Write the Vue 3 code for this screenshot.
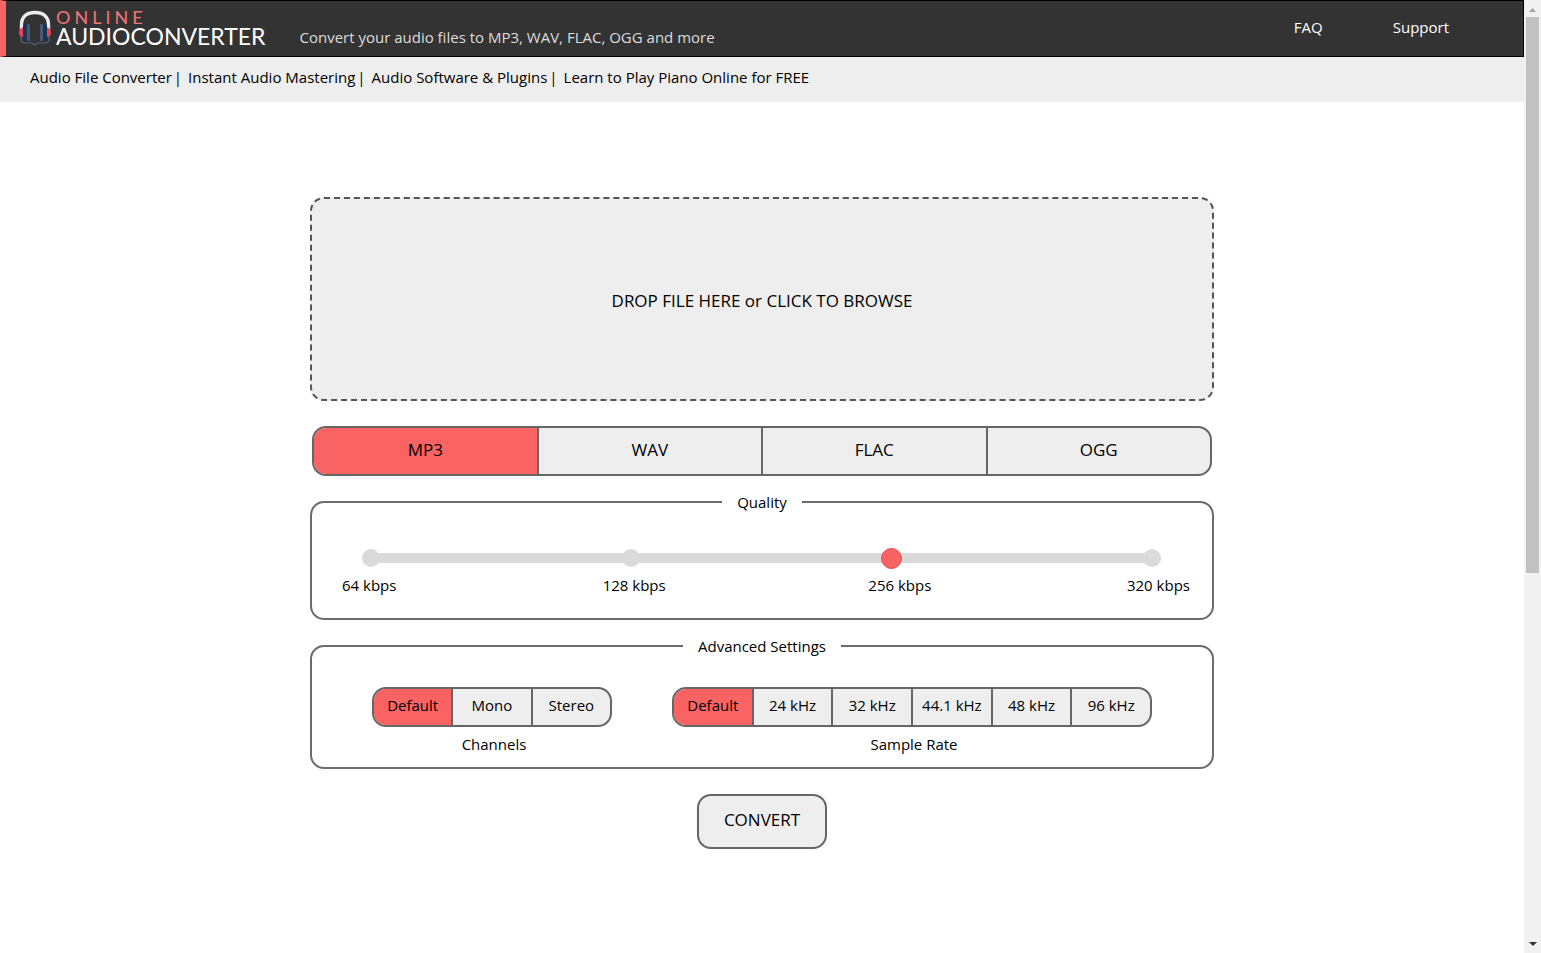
<script setup>
import { ref } from 'vue'

const links = [
  'Audio File Converter',
  'Instant Audio Mastering',
  'Audio Software & Plugins',
  'Learn to Play Piano Online for FREE',
]
const formats = ['MP3', 'WAV', 'FLAC', 'OGG']
const bitrates = ['64 kbps', '128 kbps', '256 kbps', '320 kbps']
const channelModes = ['Default', 'Mono', 'Stereo']
const sampleRates = ['Default', '24 kHz', '32 kHz', '44.1 kHz', '48 kHz', '96 kHz']

const format = ref('MP3')
const quality = ref(2)
const channels = ref('Default')
const sampleRate = ref('Default')
</script>

<template>
  <div class="window">
    <div class="page">
      <header class="header">
        <a class="logo" href="#">
          <svg class="logo-icon" viewBox="0 0 34 38" width="34" height="38" aria-hidden="true">
            <path d="M3.500 21V16C3.500 7 9.500 3.500 17 3.500S30.500 7 30.500 16V21" fill="none" stroke="#ececec" stroke-width="3.400" />
            <path d="M3 26V30Q3 34 8 34H14L17 36L20 34H26Q31 34 31 30V26" fill="none" stroke="#56607c" stroke-width="1.200" />
            <path d="M6 18Q1 19 1 23.500T6 28ZM28 18Q33 19 33 23.500T28 28Z" fill="#e8455a" />
            <rect x="5" y="15" width="5" height="17" rx="2" fill="#1c3550" />
            <rect x="9" y="15" width="3" height="17" rx="1" fill="#47587a" />
            <rect x="24" y="15" width="5" height="17" rx="2" fill="#1c3550" />
            <rect x="22" y="15" width="3" height="17" rx="1" fill="#47587a" />
          </svg>
          <span class="wordmark">
            <span class="word-top">ONLINE</span>
            <span class="word-main">AUDIOCONVERTER</span>
          </span>
        </a>
        <p class="tagline">Convert your audio files to MP3, WAV, FLAC, OGG and more</p>
        <nav class="menu">
          <a href="#">FAQ</a>
          <a href="#">Support</a>
        </nav>
      </header>

      <nav class="links">
        <span v-for="(link, i) in links" :key="link" class="link-item">
          <a href="#">{{ link }}</a><span v-if="i < links.length - 1" class="bar">|</span>
        </span>
      </nav>

      <main class="converter">
        <button class="dropzone" type="button">DROP FILE HERE or CLICK TO BROWSE</button>

        <div class="segments formats" role="radiogroup" aria-label="Format">
          <label v-for="f in formats" :key="f" class="segment" :class="{ active: f === format }">
            <input v-model="format" type="radio" name="format" :value="f" />{{ f }}
          </label>
        </div>

        <fieldset class="panel quality">
          <legend>Quality</legend>
          <div class="slider">
            <div class="track">
              <span v-for="b in bitrates" :key="b" class="stop"></span>
            </div>
            <input v-model.number="quality" class="range" type="range" min="0" max="3" step="1" aria-label="Quality" />
          </div>
          <div class="bitrates">
            <span v-for="b in bitrates" :key="b">{{ b }}</span>
          </div>
        </fieldset>

        <fieldset class="panel advanced">
          <legend>Advanced Settings</legend>
          <div class="setting channels">
            <div class="segments" role="radiogroup" aria-labelledby="channels-label">
              <label v-for="c in channelModes" :key="c" class="segment" :class="{ active: c === channels }">
                <input v-model="channels" type="radio" name="channels" :value="c" />{{ c }}
              </label>
            </div>
            <span id="channels-label" class="caption">Channels</span>
          </div>
          <div class="setting rates">
            <div class="segments" role="radiogroup" aria-labelledby="rate-label">
              <label v-for="r in sampleRates" :key="r" class="segment" :class="{ active: r === sampleRate }">
                <input v-model="sampleRate" type="radio" name="rate" :value="r" />{{ r }}
              </label>
            </div>
            <span id="rate-label" class="caption">Sample Rate</span>
          </div>
        </fieldset>

        <button class="convert" type="button">CONVERT</button>
      </main>
    </div>

    <div class="scrollbar" aria-hidden="true">
      <svg class="arrow up" viewBox="0 0 7 4" width="7" height="4"><path d="M0 4L3.500 0L7 4Z" fill="#a3a3a3" /></svg>
      <div class="rail"><div class="thumb"></div></div>
      <svg class="arrow" viewBox="0 0 8 4" width="8" height="4"><path d="M0 0H8L4 4Z" fill="#333" /></svg>
    </div>
  </div>
</template>

<style>
body {
  background: #fff;
}
</style>

<style scoped>
.window {
  display: flex;
  height: 100vh;
  overflow: hidden;
  font-family: "Open Sans", "Noto Sans", sans-serif;
  font-size: 15px;
  line-height: 24px;
  color: #000;
}

.window * {
  box-sizing: border-box;
}

.page {
  flex: 1;
  min-width: 0;
}

a {
  color: inherit;
  text-decoration: none;
}

button {
  font: inherit;
  color: inherit;
  cursor: pointer;
}

.header {
  display: flex;
  height: 57px;
  border: 1px solid #000;
  border-left: 6px solid #f96363;
  background: #333;
}

.logo {
  display: flex;
  gap: 4px;
  padding: 8px 0 0 12px;
}

.wordmark {
  display: flex;
  flex-direction: column;
  font-family: Lato, sans-serif;
}

.word-top {
  font-size: 18px;
  line-height: 17px;
  letter-spacing: 4px;
  color: #f07478;
}

.word-main {
  font-size: 23px;
  line-height: 20px;
  color: #fff;
}

.tagline {
  margin: 24px 0 0 34px;
  color: #ddd;
}

.menu {
  display: flex;
  gap: 70px;
  margin: 14px 74px 0 auto;
  font-weight: 500;
  color: #fff;
}

.links {
  display: flex;
  gap: 6px;
  height: 45px;
  padding: 8px 30px 0;
  background: #eee;
}

.bar {
  margin-left: 2px;
}

.converter {
  display: flex;
  flex-direction: column;
  align-items: center;
  width: 904px;
  max-width: 100%;
  margin: 95px auto 0;
}

.dropzone {
  width: 100%;
  height: 204px;
  padding: 4px 0 0;
  border: 2px dashed #555;
  border-radius: 14px;
  background: #eee;
  font-size: 17px;
}

.segments {
  display: flex;
  overflow: hidden;
  border: 2px solid #666;
  border-radius: 14px;
  background: #eee;
}

.segment {
  position: relative;
  flex: 1;
  text-align: center;
  line-height: 32px;
  white-space: nowrap;
  cursor: pointer;
}

.segment + .segment {
  border-left: 2px solid #666;
}

.segment input {
  position: absolute;
  inset: 0;
  margin: 0;
  opacity: 0;
}

.segment.active {
  background: #f96363;
}

.formats {
  align-self: stretch;
  height: 50px;
  margin: 25px 2px 14px;
  font-size: 17px;
}

.formats .segment {
  line-height: 44px;
}

.panel {
  width: 100%;
  min-width: 0;
  margin: 0;
  border: 2px solid #6c6c6c;
  border-radius: 14px;
}

.panel legend {
  margin: 0 auto;
  padding: 0 15px;
}

.quality {
  height: 130px;
  padding: 33px 0 0;
}

.slider {
  position: relative;
  height: 22px;
  margin: 0 49px 0 48px;
}

.track {
  display: flex;
  justify-content: space-between;
  align-items: center;
  height: 22px;
  padding: 0 2px;
  background: linear-gradient(#dadada, #dadada) center / calc(100% - 20px) 10px no-repeat;
}

.stop {
  width: 18px;
  height: 18px;
  border-radius: 50%;
  background: #dadada;
}

.range {
  position: absolute;
  inset: 0;
  width: 100%;
  height: 22px;
  margin: 0;
  appearance: none;
  background: transparent;
}

.range::-webkit-slider-thumb {
  appearance: none;
  width: 21px;
  height: 21px;
  border: 1px solid #e04a50;
  border-radius: 50%;
  background: #f96363;
}

.bitrates {
  display: grid;
  grid-template-columns: 261fr 266fr 259fr 61fr;
  margin: 4px 22px 0 30px;
  white-space: nowrap;
}

.advanced {
  display: flex;
  gap: 60px;
  height: 135px;
  margin-top: 14px;
  padding: 29px 60px 0;
}

.setting {
  display: flex;
  flex-direction: column;
  gap: 5px;
  text-align: center;
}

.setting .segments {
  height: 40px;
}

.channels {
  flex: 0 1 240px;
}

.rates {
  flex: 0 1 480px;
}

.caption {
  padding-left: 4px;
}

.convert {
  height: 55px;
  width: 130px;
  margin-top: 25px;
  padding: 0 0 3px;
  border: 2px solid #666;
  border-radius: 14px;
  background: #eee;
  font-size: 17px;
}

.scrollbar {
  display: flex;
  flex-direction: column;
  align-items: center;
  width: 17px;
  padding: 8px 0 7px;
  background: #f1f1f1;
}

.rail {
  flex: 1;
  width: 13px;
  margin: 5px 0 13px;
}

.thumb {
  height: 61%;
  background: #c1c1c1;
}
</style>
